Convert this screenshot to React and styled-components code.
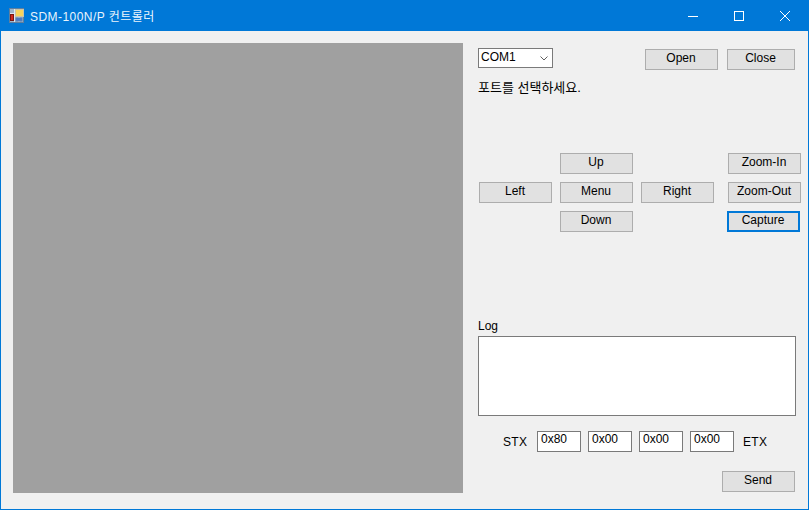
import React from "react";
import styled, { createGlobalStyle } from "styled-components";

const Global = createGlobalStyle`
  html, body { margin: 0; padding: 0; background: #f0f0f0; }
  body { font-family: "Liberation Sans", "Noto Sans CJK KR", sans-serif; }
  * { box-sizing: border-box; }
`;
const Win = styled.div`
  width: 809px; height: 510px; display: flex; flex-direction: column;
  border: 1px solid #0078d7; border-top: 0; background: #f0f0f0; overflow: hidden;
`;
const TitleBar = styled.div`
  height: 31px; flex: none; margin: 0 -1px; background: #0078d7; color: #fff;
  display: flex; align-items: center; padding: 0 1px 0 9px;
`;
const TitleText = styled.span`
  font-size: 12px; margin-left: 5px; flex: 1; color: #eaf4fc; letter-spacing: 0.45px;
`;
const WinBtn = styled.div`
  width: 46px; height: 31px; display: flex; align-items: center; justify-content: center;
`;
const Body = styled.div`
  flex: 1; display: flex; padding: 12px 0 0 12px;
`;
const Screen = styled.div`
  width: 450px; height: 450px; flex: none; background: #a0a0a0;
`;
const Side = styled.div`
  width: 333px; margin-left: 15px; display: flex; flex-direction: column; position: relative;
`;
const PortRow = styled.div`
  display: flex; align-items: flex-start; height: 21px; margin-top: 5px;
`;
const Combo = styled.div`
  width: 75px; height: 20px; border: 1px solid #7a7a7a; background: #fff;
  display: flex; align-items: center; justify-content: space-between;
  padding: 0 4px 2px 2px; font-size: 12px; color: #000; margin-right: 92px;
`;
const Chevron = styled.svg`
  margin-top: 3px; flex: none;
`;
const Btn = styled.div`
  width: ${p => p.$w || 73}px; height: 21px; flex: none;
  background: #e1e1e1; border: ${p => p.$focus ? "2px solid #0078d7" : "1px solid #adadad"};
  font-size: 12px; color: #000; display: flex; align-items: center; justify-content: center;
  padding: 0 1px 3px 0;
`;
const Gap = styled.div`
  width: ${p => p.$w}px; flex: none;
`;
const OpenRow = styled.div`
  display: flex; margin-top: 1px;
`;
const Hint = styled.div`
  font-size: 13px; color: #000; margin-top: 11px; height: 16px; line-height: 16px;
`;
const Nav = styled.div`
  margin-top: 57px; display: grid; margin-left: 1px;
  grid-template-columns: 73px 73px 73px 73px; column-gap: 8px; row-gap: 8px;
  grid-template-rows: 21px 21px 21px;
`;
const Cell = styled.div`
  grid-column: ${p => p.$c}; grid-row: ${p => p.$r};
  margin-left: ${p => p.$c === 4 ? (p.$f ? 5 : 6) : 0}px;
`;
const LogLabel = styled.div`
  font-size: 12px; color: #000; margin-top: 87px; height: 16px; line-height: 14px;
`;
const LogBox = styled.div`
  width: 318px; height: 80px; background: #fff; border: 1px solid #7a7a7a; margin-top: 1px;
`;
const PacketRow = styled.div`
  display: flex; align-items: center; margin-top: 15px; padding-left: 25px; height: 21px;
`;
const Tag = styled.span`
  font-size: 12px; color: #000; letter-spacing: 0.3px; width: ${p => p.$w || "auto"};
`;
const ByteBox = styled.div`
  width: 44px; height: 21px; border: 1px solid #7a7a7a; background: #fff;
  font-size: 12px; color: #000; padding-left: 3px; line-height: 15px; margin-right: 7px;
`;
const SendRow = styled.div`
  display: flex; justify-content: flex-end; margin-top: 19px; width: 317px;
`;
const AppIcon = () => (
  <svg width="16" height="16" viewBox="0 0 16 16">
    <rect x="0.5" y="0.5" width="14" height="14" fill="#9fb6cc" stroke="#5f7f9f" />
    <path d="M5.5 1V14M1 5.5H14M10 9V14" stroke="#dfe8f0" fill="none" />
    <rect x="6.5" y="1.5" width="8" height="7" fill="#f7d45c" stroke="#c9c4a8" />
    <rect x="1.5" y="6.5" width="3" height="6" fill="#d0281e" stroke="#7a1810" />
    <rect x="7" y="10" width="6" height="3" fill="#4878c8" stroke="#5a80b0" />
  </svg>
);

export default function App() {
  return (
    <Win>
      <Global />
      <TitleBar>
        <AppIcon />
        <TitleText>SDM-100N/P 컨트롤러</TitleText>
        <WinBtn>
          <svg width="10" height="10" viewBox="0 0 10 10"><path d="M0 5.5H10" stroke="#fff" fill="none" /></svg>
        </WinBtn>
        <WinBtn>
          <svg width="10" height="10" viewBox="0 0 10 10"><rect x="0.5" y="0.5" width="9" height="9" stroke="#fff" fill="none" /></svg>
        </WinBtn>
        <WinBtn>
          <svg width="10" height="10" viewBox="0 0 10 10"><path d="M0 0L10 10M10 0L0 10" stroke="#fff" fill="none" /></svg>
        </WinBtn>
      </TitleBar>
      <Body>
        <Screen />
        <Side>
          <PortRow>
            <Combo>
              COM1
              <Chevron width="8" height="5" viewBox="0 0 8 5"><path d="M0.5 0.5L4 4L7.5 0.5" stroke="#606060" fill="none" /></Chevron>
            </Combo>
            <OpenRow>
              <Btn>Open</Btn>
              <Gap $w={9} />
              <Btn $w={68}>Close</Btn>
            </OpenRow>
          </PortRow>
          <Hint>포트를 선택하세요.</Hint>
          <Nav>
            <Cell $c={2} $r={1}><Btn>Up</Btn></Cell>
            <Cell $c={4} $r={1}><Btn>Zoom-In</Btn></Cell>
            <Cell $c={1} $r={2}><Btn>Left</Btn></Cell>
            <Cell $c={2} $r={2}><Btn>Menu</Btn></Cell>
            <Cell $c={3} $r={2}><Btn>Right</Btn></Cell>
            <Cell $c={4} $r={2}><Btn>Zoom-Out</Btn></Cell>
            <Cell $c={2} $r={3}><Btn>Down</Btn></Cell>
            <Cell $c={4} $r={3} $f><Btn $focus>Capture</Btn></Cell>
          </Nav>
          <LogLabel>Log</LogLabel>
          <LogBox />
          <PacketRow>
            <Tag $w="25px">STX</Tag>
            <Gap $w={9} />
            <ByteBox>0x80</ByteBox>
            <ByteBox>0x00</ByteBox>
            <ByteBox>0x00</ByteBox>
            <ByteBox>0x00</ByteBox>
            <Gap $w={2} />
            <Tag>ETX</Tag>
          </PacketRow>
          <SendRow><Btn>Send</Btn></SendRow>
        </Side>
      </Body>
    </Win>
  );
}
